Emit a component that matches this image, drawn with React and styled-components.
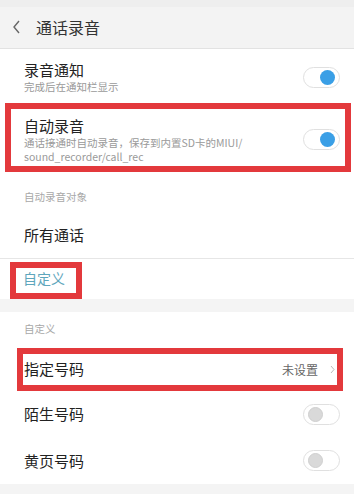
import React from "react";
import styled, { createGlobalStyle } from "styled-components";

const Global = createGlobalStyle`
  html, body { margin: 0; padding: 0; background: #ffffff; }
  body { font-family: "Noto Sans CJK SC", "Noto Sans", sans-serif; -webkit-font-smoothing: antialiased; }
  * { box-sizing: border-box; }
`;

const Page = styled.div`
  width: 354px;
  height: 494px;
  overflow: hidden;
  display: flex;
  flex-direction: column;
  background: #fff;
`;

const StatusBar = styled.div`
  height: 7px;
  background: #eeeeee;
`;

const Header = styled.div`
  height: 42px;
  background: #f3f3f3;
  border-bottom: 1px solid #e2e2e2;
  display: flex;
  align-items: center;
  padding-left: 12px;
  gap: 14px;
`;

const HeaderTitle = styled.div`
  font-size: 16px;
  color: #333;
  line-height: 20px;
`;

const Row = styled.div`
  height: ${(p) => p.$h}px;
  display: flex;
  align-items: ${(p) => (p.$top ? "flex-start" : "center")};
  padding: ${(p) => p.$pad || "0 14px 0 24px"};
  ${(p) => (p.$divider ? "border-bottom: 1px solid #e6e6e6;" : "")}
`;

const TextCol = styled.div`
  flex: 1;
  display: flex;
  flex-direction: column;
  margin-left: ${(p) => p.$ml || 0}px;
`;

const Title = styled.div`
  font-size: 15px;
  line-height: 20px;
  color: #222;
`;

const Sub = styled.div`
  font-size: 10.5px;
  line-height: 14px;
  color: #9a9a9a;
  margin-top: ${(p) => p.$mt || 0}px;
`;

const RedBox = styled.div`
  border: 6px solid #e3393c;
  margin: ${(p) => p.$m};
  width: ${(p) => (p.$w ? `${p.$w}px` : "auto")};
  height: ${(p) => (p.$hh ? `${p.$hh}px` : "auto")};
  background: #fff;
`;

const SectionLabel = styled.div`
  height: ${(p) => p.$h}px;
  padding: ${(p) => p.$pt}px 0 0 24px;
  font-size: 10.5px;
  line-height: 14px;
  color: #a8a8a8;
`;

const LinkText = styled.div`
  font-size: 14px;
  line-height: 20px;
  color: #5ea6bc;
  padding-left: 7px;
`;

const Gap = styled.div`
  height: ${(p) => p.$h}px;
  background: #f4f4f4;
`;

const Track = styled.div`
  width: 37px;
  height: 21px;
  border-radius: 11px;
  border: 1px solid #e0e0e0;
  background: #fff;
  display: flex;
  align-items: center;
  justify-content: ${(p) => (p.$on ? "flex-end" : "flex-start")};
  padding: 0 4px;
  flex-shrink: 0;
  margin-top: ${(p) => p.$mt || 0}px;
`;

const Knob = styled.div`
  width: 15px;
  height: 15px;
  border-radius: 50%;
  background: ${(p) => (p.$on ? "#3a9fe6" : "#d9d9d9")};
  ${(p) => (p.$on ? "" : "border: 1px solid #cfcfcf;")}
`;

const Value = styled.div`
  font-size: 12px;
  color: #666;
  margin-right: 12px;
`;

const Toggle = ({ on, mt }) => (
  <Track $on={on} $mt={mt}>
    <Knob $on={on} />
  </Track>
);

export default function App() {
  return (
    <Page>
      <Global />
      <StatusBar />
      <Header>
        <svg width="10" height="16" viewBox="0 0 10 16">
          <polyline points="7,2 2,8 7,14" fill="none" stroke="#666" strokeWidth="1.4" />
        </svg>
        <HeaderTitle>通话录音</HeaderTitle>
      </Header>

      <Row $h={55} $top $pad="11px 14px 0 24px">
        <TextCol>
          <Title>录音通知</Title>
          <Sub>完成后在通知栏显示</Sub>
        </TextCol>
        <Toggle on mt={7} />
      </Row>

      <RedBox $m="0 3px 0 5px">
        <Row $h={57} $top $pad="7px 5px 0 13px">
          <TextCol>
            <Title>自动录音</Title>
            <Sub>
              通话接通时自动录音，保存到内置SD卡的MIUI/
              <br />
              sound_recorder/call_rec
            </Sub>
          </TextCol>
          <Toggle on mt={13} />
        </Row>
      </RedBox>

      <SectionLabel $h={40} $pt={18}>自动录音对象</SectionLabel>
      <Row $h={47} $divider $pad="0 14px 0 0">
        <TextCol $ml={24}>
          <Title>所有通话</Title>
        </TextCol>
      </Row>

      <Row $h={41} $top $pad="3px 0 0 10px">
        <RedBox $m="0" $w={72} $hh={37}>
          <LinkText>自定义</LinkText>
        </RedBox>
      </Row>

      <Gap $h={13} />
      <SectionLabel $h={36} $pt={10}>自定义</SectionLabel>

      <RedBox $m="0 11px 0 17px">
        <Row $h={31} $pad="0 2px 0 1px">
          <TextCol>
            <Title>指定号码</Title>
          </TextCol>
          <Value>未设置</Value>
          <svg width="5" height="9" viewBox="0 0 5 9">
            <polyline points="1,1 4,4.5 1,8" fill="none" stroke="#bbb" strokeWidth="1" />
          </svg>
        </Row>
      </RedBox>

      <Row $h={47}>
        <TextCol>
          <Title>陌生号码</Title>
        </TextCol>
        <Toggle />
      </Row>
      <Row $h={47}>
        <TextCol>
          <Title>黄页号码</Title>
        </TextCol>
        <Toggle />
      </Row>
      <Gap $h={10} />
    </Page>
  );
}
